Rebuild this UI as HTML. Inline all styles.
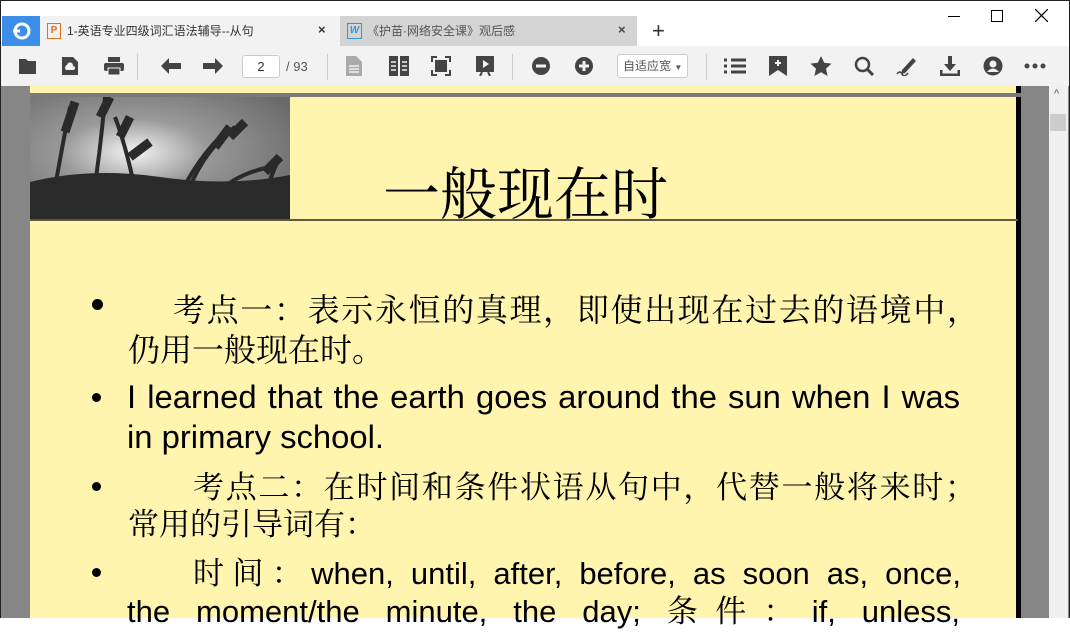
<!DOCTYPE html>
<html><head><meta charset="utf-8"><style>
*{margin:0;padding:0;box-sizing:border-box}
body{width:1070px;height:618px;overflow:hidden;background:#fff;position:relative;font-family:"Liberation Sans","Noto Sans CJK SC",sans-serif}
.a{position:absolute}
.tb svg{position:absolute}
.cj{font-family:"Noto Serif CJK SC","Liberation Serif",serif;color:#000;white-space:nowrap}
.en{font-family:"Liberation Sans",sans-serif;color:#000;white-space:nowrap}
.j{text-align:justify;text-align-last:justify}
.dot{position:absolute;width:9px;height:9px;border-radius:50%;background:#000}
</style></head><body>
<div class="a" style="left:0;top:0;width:1070px;height:618px;border:1px solid #222;border-bottom:none;pointer-events:none;z-index:9"></div>
<div class="a" style="left:948px;top:16px;width:12px;height:1px;background:#000"></div>
<div class="a" style="left:991px;top:10px;width:12px;height:12px;border:1px solid #000"></div>
<svg class="a" style="left:1035px;top:9px" width="13" height="13"><path d="M0 0L13 13M13 0L0 13" stroke="#000" stroke-width="1.2"/></svg>
<div class="a" style="left:2px;top:16px;width:38px;height:30px;background:#3d8ee8"></div>
<svg class="a" style="left:10px;top:21px" width="22" height="20"><circle cx="12" cy="10" r="7" fill="none" stroke="#fff" stroke-width="3"/><path d="M3 10 L10 10" stroke="#fff" stroke-width="3"/></svg>
<div class="a" style="left:40px;top:16px;width:300px;height:30px;background:#f2f2f2"></div>
<div class="a" style="left:47px;top:23px;width:14px;height:16px;border:1.5px solid #e07020;color:#e07020;font-size:10px;font-weight:bold;text-align:center;line-height:13px">P</div>
<div class="a" style="left:67px;top:22px;font-size:12px;color:#333">1-英语专业四级词汇语法辅导--从句</div>
<div class="a" style="left:318px;top:22px;font-size:13px;color:#333;font-weight:bold">×</div>
<div class="a" style="left:340px;top:16px;width:297px;height:30px;background:#d4d4d4"></div>
<div class="a" style="left:347px;top:23px;width:15px;height:16px;border:1.5px solid #2a9ad8;color:#2a9ad8;font-size:10px;font-weight:bold;font-style:italic;text-align:center;line-height:13px">W</div>
<div class="a" style="left:367px;top:22px;font-size:12px;color:#555">《护苗·网络安全课》观后感</div>
<div class="a" style="left:618px;top:22px;font-size:13px;color:#444;font-weight:bold">×</div>
<div class="a" style="left:652px;top:18px;font-size:22px;color:#333">+</div>
<div class="a tb" style="left:0;top:46px;width:1070px;height:40px;background:#f2f2f2">
<svg style="left:18px;top:11px" width="20" height="18"><path d="M1 2h7l2 2h8v13H1z" fill="#444"/></svg>
<svg style="left:61px;top:10px" width="18" height="20"><path d="M1 1h11l5 5v13H1z" fill="#444"/><path d="M5 14a3 3 0 0 1 1-5a3 3 0 0 1 6 1a2 2 0 0 1 0 4z" fill="#f2f2f2"/></svg>
<svg style="left:103px;top:11px" width="22" height="18"><rect x="5" y="0" width="12" height="5" fill="#444"/><rect x="1" y="6" width="20" height="8" rx="2" fill="#444"/><rect x="5" y="11" width="12" height="7" fill="#444" stroke="#f2f2f2"/></svg>
<div class="a" style="left:137px;top:8px;width:1px;height:26px;background:#ccc"></div>
<svg style="left:161px;top:12px" width="20" height="16"><path d="M0 8l8-8v5h12v6H8v5z" fill="#444"/></svg>
<svg style="left:203px;top:12px" width="20" height="16"><path d="M20 8l-8-8v5H0v6h12v5z" fill="#444"/></svg>
<div class="a" style="left:242px;top:9px;width:38px;height:23px;border:1px solid #ccc;border-radius:3px;background:#fff;font-size:13px;text-align:center;line-height:21px;color:#333">2</div>
<div class="a" style="left:286px;top:13px;font-size:13px;color:#555">/ 93</div>
<div class="a" style="left:327px;top:8px;width:1px;height:26px;background:#ccc"></div>
<svg style="left:346px;top:10px" width="16" height="20"><path d="M0 0h10l6 6v14H0z" fill="#aaa"/><path d="M3 10h10M3 13h10M3 16h10" stroke="#f2f2f2" stroke-width="1.5"/></svg>
<svg style="left:389px;top:10px" width="20" height="20"><rect x="0" y="0" width="9" height="20" fill="#444"/><rect x="11" y="0" width="9" height="20" fill="#444"/><path d="M2 6h5M2 10h5M2 14h5M13 6h5M13 10h5M13 14h5" stroke="#f2f2f2" stroke-width="1.5"/></svg>
<svg style="left:431px;top:10px" width="20" height="20"><path d="M1 6V1h5M14 1h5v5M19 14v5h-5M6 19H1v-5" stroke="#444" stroke-width="2" fill="none"/><rect x="4" y="4" width="12" height="12" fill="#444"/></svg>
<svg style="left:475px;top:10px" width="20" height="20"><rect x="1" y="0" width="18" height="16" fill="#444"/><path d="M8 4l6 4-6 4z" fill="#f2f2f2"/><path d="M7 16l-2 4M13 16l2 4" stroke="#444" stroke-width="2"/></svg>
<div class="a" style="left:512px;top:8px;width:1px;height:26px;background:#ccc"></div>
<svg style="left:531px;top:10px" width="20" height="20"><circle cx="10" cy="10" r="9" fill="#444"/><path d="M5 10h10" stroke="#f2f2f2" stroke-width="3"/></svg>
<svg style="left:574px;top:10px" width="20" height="20"><circle cx="10" cy="10" r="9" fill="#444"/><path d="M5 10h10M10 5v10" stroke="#f2f2f2" stroke-width="3"/></svg>
<div class="a" style="left:617px;top:8px;width:71px;height:24px;border:1px solid #ccc;border-radius:3px;background:#fff;font-size:12px;line-height:22px;padding-left:5px;color:#555">自适应宽 <span style="font-size:8px">▼</span></div>
<div class="a" style="left:706px;top:8px;width:1px;height:26px;background:#ccc"></div>
<svg style="left:724px;top:12px" width="22" height="16"><path d="M0 2h3M7 2h15M0 8h3M7 8h15M0 14h3M7 14h15" stroke="#444" stroke-width="3"/></svg>
<svg style="left:769px;top:10px" width="18" height="20"><path d="M0 0h18v20l-9-6-9 6z" fill="#444"/><path d="M6 7h6M9 4v6" stroke="#f2f2f2" stroke-width="2"/></svg>
<svg style="left:810px;top:10px" width="22" height="20"><path d="M11 0l3.2 6.8 7.3.8-5.5 5 1.6 7.4L11 16.3 4.4 20 6 12.6 0.5 7.6l7.3-.8z" fill="#444"/></svg>
<svg style="left:854px;top:10px" width="20" height="20"><circle cx="8.5" cy="8.5" r="6.5" fill="none" stroke="#444" stroke-width="2.5"/><path d="M13 13l6 6" stroke="#444" stroke-width="3"/></svg>
<svg style="left:896px;top:10px" width="22" height="20"><path d="M6 14L17 2l3 3L9 17l-4 1z" fill="#444"/><path d="M1 18q3-4 5 0t6-1" stroke="#444" fill="none" stroke-width="1.5"/></svg>
<svg style="left:940px;top:10px" width="20" height="20"><path d="M8 0h4v8h4l-6 7-6-7h4z" fill="#444"/><path d="M1 14v5h18v-5" stroke="#444" stroke-width="3" fill="none"/></svg>
<svg style="left:983px;top:10px" width="20" height="20"><circle cx="10" cy="10" r="9.5" fill="#444"/><circle cx="10" cy="8" r="3.5" fill="#f2f2f2"/><path d="M4 16q6-7 12 0" fill="#f2f2f2"/></svg>
<svg style="left:1024px;top:17px" width="22" height="6"><circle cx="3" cy="3" r="2.5" fill="#444"/><circle cx="11" cy="3" r="2.5" fill="#444"/><circle cx="19" cy="3" r="2.5" fill="#444"/></svg>
</div>
<div class="a" style="left:0;top:86px;width:1070px;height:532px;background:#868686"></div>
<div class="a" style="left:1049px;top:86px;width:19px;height:532px;background:#f0f0f0"></div>
<div class="a" style="left:1054px;top:88px;font-size:11px;color:#555">^</div>
<div class="a" style="left:1050px;top:114px;width:16px;height:17px;background:#cdcdcd"></div>
<div class="a" style="left:30px;top:86px;width:986px;height:532px;background:#fff5ae"></div>
<div class="a" style="left:1016px;top:86px;width:5px;height:532px;background:#000"></div>
<div class="a" style="left:30px;top:93px;width:991px;height:4px;background:#7a7a7a"></div>
<svg class="a" style="left:30px;top:97px" width="260" height="123">
<defs><radialGradient id="g" cx="0.4" cy="0.45" r="0.7"><stop offset="0" stop-color="#f4f4f4"/><stop offset="0.4" stop-color="#999"/><stop offset="1" stop-color="#6a6a6a"/></radialGradient></defs>
<rect width="260" height="123" fill="url(#g)"/>
<g stroke="#2a2a2a" fill="none">
<path d="M20 120 Q30 60 40 10M60 120 Q70 60 75 0M110 120 Q100 60 85 20M140 120Q160 70 190 40M150 120Q165 60 205 30M170 120Q190 80 240 70M230 120Q235 90 250 60" stroke-width="4"/>
<path d="M35 35 L45 5M70 20L80 0M90 40L100 20M185 50L200 30M200 40L215 25M235 75L250 60M100 60L120 45" stroke-width="9"/>
</g>
<path d="M0 85 Q60 70 130 80 T260 78 V123H0z" fill="#2a2a2a"/>
</svg>
<div class="a" style="left:30px;top:219px;width:988px;height:2px;background:#5f5840"></div>
<div class="a cj" style="left:383px;top:157px;font-size:57px;line-height:66px">一般现在时</div>
<div class="dot" style="left:92px;top:299px;width:11px;height:11px"></div>
<div class="a cj j" style="left:173px;top:287px;width:806px;font-size:32px;line-height:42px">考点一：表示永恒的真理，即使出现在过去的语境中，</div>
<div class="a cj" style="left:128px;top:327px;font-size:32px;line-height:42px">仍用一般现在时。</div>
<div class="dot" style="left:92px;top:393px"></div>
<div class="a en j" style="left:127px;top:378px;width:833px;font-size:32.8px;line-height:38px">I learned that the earth goes around the sun when I was</div>
<div class="a en" style="left:127px;top:418px;font-size:32.8px;line-height:38px">in primary school.</div>
<div class="dot" style="left:92px;top:482px"></div>
<div class="a cj j" style="left:193px;top:464px;width:783px;font-size:31px;line-height:42px">考点二：在时间和条件状语从句中，代替一般将来时；</div>
<div class="a cj" style="left:128px;top:501px;font-size:31px;line-height:42px">常用的引导词有：</div>
<div class="dot" style="left:92px;top:568px"></div>
<div class="a j en" style="left:193px;top:551px;width:768px;font-size:31px;line-height:40px"><span class="cj">时间：</span>when, until, after, before, as soon as, once,</div>
<div class="a j en" style="left:127px;top:589px;width:833px;font-size:31px;line-height:40px">the moment/the minute, the day; <span class="cj">条件：</span>if, unless,</div>
</body></html>
